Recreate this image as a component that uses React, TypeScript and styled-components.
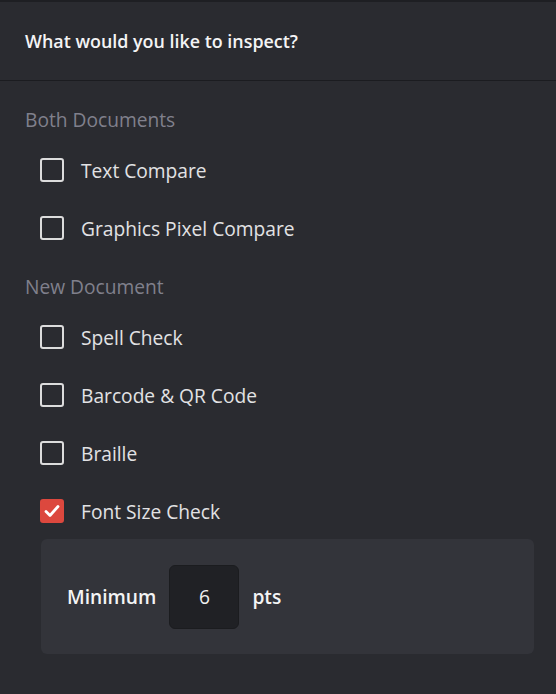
import React, { useState } from "react";
import styled, { createGlobalStyle } from "styled-components";

const Global = createGlobalStyle`
  html, body {
    margin: 0;
    padding: 0;
    background: #2a2b30;
  }
  body {
    font-family: "Open Sans", "Noto Sans", sans-serif;
    -webkit-font-smoothing: antialiased;
  }
`;

const Dialog = styled.div`
  width: 556px;
  min-height: 694px;
  background: #2a2b30;
  border-top: 2px solid #1e1f23;
  box-sizing: border-box;
`;

const Header = styled.div`
  height: 79px;
  display: flex;
  align-items: center;
  padding: 0 25px;
  border-bottom: 1px solid #1b1c20;
  color: #f4f4f5;
  font-size: 17.9px;
  font-weight: 600;
  box-sizing: border-box;
`;

const Body = styled.div`
  display: flex;
  flex-direction: column;
  padding: 9px 22px 0 25px;
`;

const SectionLabel = styled.div`
  height: 44px;
  margin-top: 7px;
  display: flex;
  align-items: center;
  color: #80808c;
  font-size: 19.2px;
`;

const Row = styled.label`
  height: 58px;
  display: flex;
  align-items: center;
  padding-left: 15px;
  gap: 17px;
  color: #e2e2e4;
  font-size: 19.2px;
  cursor: pointer;
`;

const Box = styled.span<{ $checked: boolean }>`
  width: 24px;
  height: 24px;
  box-sizing: border-box;
  border-radius: 3px;
  border: 2px solid ${(p) => (p.$checked ? "#dc483e" : "#dcdcdc")};
  background: ${(p) => (p.$checked ? "#dc483e" : "transparent")};
  display: flex;
  align-items: center;
  justify-content: center;
  flex-shrink: 0;
`;

const Panel = styled.div`
  margin: -1px 0 0 16px;
  height: 115px;
  background: #33343a;
  border-radius: 6px;
  display: flex;
  align-items: center;
  padding-left: 26px;
  gap: 13px;
  color: #f4f4f5;
  font-size: 19.2px;
  font-weight: 600;
`;

const NumberField = styled.input`
  width: 70px;
  height: 64px;
  box-sizing: border-box;
  background: #202125;
  border: 1px solid #1b1c1f;
  border-radius: 6px;
  color: #f0f0f0;
  font-family: "Open Sans", "Noto Sans", sans-serif;
  font-size: 19.2px;
  text-align: center;
  outline: none;
  padding: 0;
`;

const Unit = styled.span`
  font-weight: 600;
`;

const Check = () => (
  <svg width="16" height="14" viewBox="0 0 16 14">
    <path
      d="M2 7.5 L6 11.5 L14 2.5"
      fill="none"
      stroke="#ffffff"
      strokeWidth="2.8"
      strokeLinecap="round"
      strokeLinejoin="round"
    />
  </svg>
);

type Option = { id: string; label: string };

const both: Option[] = [
  { id: "text", label: "Text Compare" },
  { id: "pixel", label: "Graphics Pixel Compare" },
];

const fresh: Option[] = [
  { id: "spell", label: "Spell Check" },
  { id: "barcode", label: "Barcode & QR Code" },
  { id: "braille", label: "Braille" },
  { id: "fontsize", label: "Font Size Check" },
];

export default function App() {
  const [checked, setChecked] = useState<Record<string, boolean>>({ fontsize: true });
  const [min, setMin] = useState("6");

  const toggle = (id: string) => setChecked((c) => ({ ...c, [id]: !c[id] }));

  const renderRow = (o: Option) => (
    <Row key={o.id} onClick={() => toggle(o.id)}>
      <Box $checked={!!checked[o.id]}>{checked[o.id] && <Check />}</Box>
      {o.label}
    </Row>
  );

  return (
    <>
      <Global />
      <Dialog>
        <Header>What would you like to inspect?</Header>
        <Body>
          <SectionLabel>Both Documents</SectionLabel>
          {both.map(renderRow)}
          <SectionLabel>New Document</SectionLabel>
          {fresh.map(renderRow)}
          {checked.fontsize && (
            <Panel>
              Minimum
              <NumberField value={min} onChange={(e) => setMin(e.target.value)} />
              <Unit>pts</Unit>
            </Panel>
          )}
        </Body>
      </Dialog>
    </>
  );
}
